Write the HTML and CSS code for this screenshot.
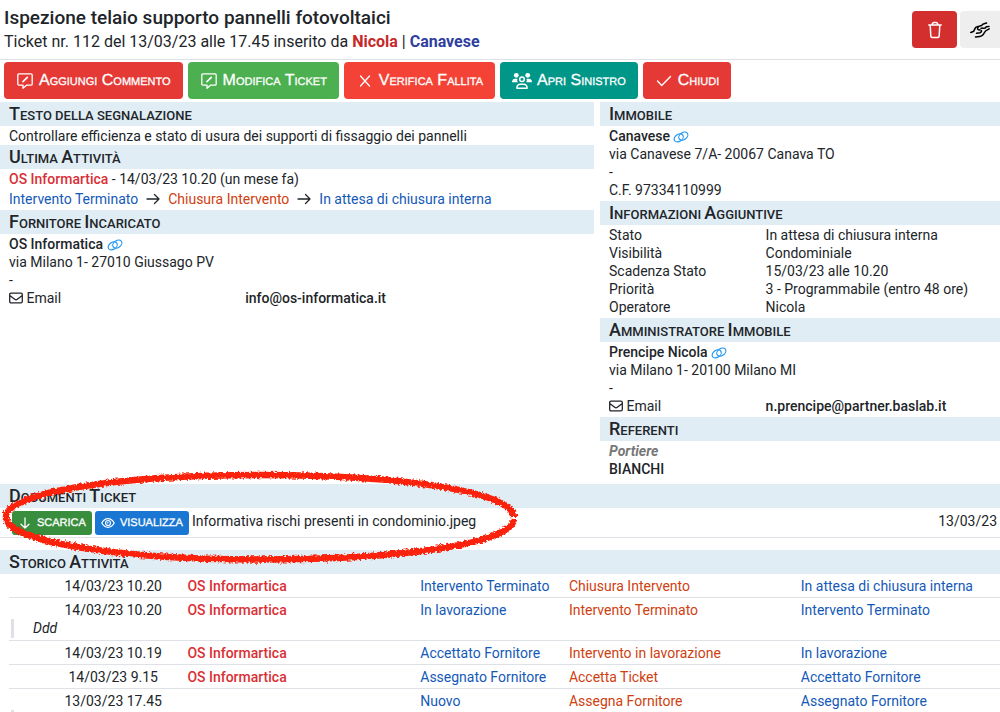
FILE: index.html
```html
<!DOCTYPE html>
<html lang="it">
<head>
<meta charset="utf-8">
<meta name="viewport" content="width=device-width, initial-scale=1">
<title>Ticket nr. 112</title>
<link rel="stylesheet" href="styles.css">
</head>
<body>
<svg class="defs" aria-hidden="true">
  <symbol id="i-comment" viewBox="0 0 18 18"><path d="M3 1.800h12q1.200 0 1.200 1.200v9q0 1.200-1.200 1.200h-4.500L7 16.300v-3.100H3q-1.200 0-1.200-1.200V3q0-1.200 1.200-1.200z" fill="none" stroke="currentColor" stroke-width="1.300" stroke-linejoin="round"/><path d="M7 9.700l4.300-4.300" fill="none" stroke="currentColor" stroke-width="1.700" stroke-linecap="round"/></symbol>
  <symbol id="i-x" viewBox="0 0 18 18"><path d="M4.500 4l9 10M13.500 4l-9 10" fill="none" stroke="currentColor" stroke-width="1.300" stroke-linecap="round"/></symbol>
  <symbol id="i-check" viewBox="0 0 18 18"><path d="M2.500 9l4.200 4.500L15.500 4.500" fill="none" stroke="currentColor" stroke-width="1.400" stroke-linecap="round" stroke-linejoin="round"/></symbol>
  <symbol id="i-users" viewBox="0 0 20 18"><g fill="currentColor"><circle cx="4.300" cy="3.300" r="2.400"/><circle cx="15.700" cy="3.300" r="2.400"/><path d="M0 10.200q0-3.500 3.200-3.500h2.300q-.9 2 .3 3.500zM20 10.200q0-3.500-3.200-3.500h-2.300q.9 2-.3 3.500z"/></g><g fill="none" stroke="currentColor" stroke-width="1.500"><circle cx="10" cy="7.200" r="2.300"/><path d="M4.900 16.200q0-3.900 3.500-3.900h3.200q3.500 0 3.500 3.900z" stroke-linejoin="round"/></g></symbol>
  <symbol id="i-trash" viewBox="0 0 18 18"><path d="M2.800 4h12.400M4.200 4l.6 11q.1 1.500 1.500 1.500h5.400q1.400 0 1.500-1.500l.6-11M6 4q.5-2.500 2-2.500h2q1.500 0 2 2.500" fill="none" stroke="currentColor" stroke-width="1.500" stroke-linecap="round" stroke-linejoin="round"/></symbol>
  <symbol id="i-hands" viewBox="0 0 20 18"><path d="M.8 11.500l2.400-1c1.400-.8 1.200-3 2.900-4.300Q7 5.400 9 5.200l2.600-.6Q12.400 3 14 2.700L16.600 2M5.500 15.900l4.300-.5q2-.2 3.200-1.600l1.900-2.900q.8-1.300 2-1.800l2.300-1.300M9 5.200Q7.300 6.800 7.600 8.200q.8 1.200 2.400.6M11 7.300h3.200q1.600-.2 2-1.500l2.800-.4M11.400 9.600q.4 1.500-1.400 2.200l-3.400.5" fill="none" stroke="currentColor" stroke-width="1.500" stroke-linecap="round" stroke-linejoin="round"/></symbol>
  <symbol id="i-link" viewBox="0 0 16 12"><g fill="none" stroke="currentColor" stroke-width="1.200"><ellipse cx="5.700" cy="6.900" rx="5" ry="3.500" transform="rotate(-35 5.700 6.900)"/><ellipse cx="10.300" cy="5.100" rx="5" ry="3.500" transform="rotate(-35 10.300 5.100)"/></g></symbol>
  <symbol id="i-mail" viewBox="0 0 14 12"><path d="M2 1.200h10q1.300 0 1.300 1.300v7q0 1.300-1.300 1.300H2Q.7 10.800.7 9.500v-7Q.7 1.200 2 1.200zM.7 3.500l5 3.800q1.300 1 2.600 0l5-3.800" fill="none" stroke="currentColor" stroke-width="1.300"/></symbol>
  <symbol id="i-arrow" viewBox="0 0 14 12"><path d="M1 6h12M8.500 1.500L13 6l-4.500 4.500" fill="none" stroke="currentColor" stroke-width="1.300" stroke-linecap="round" stroke-linejoin="round"/></symbol>
  <symbol id="i-down" viewBox="0 0 12 12"><path d="M6 1v10M2 7.200L6 11l4-3.800" fill="none" stroke="currentColor" stroke-width="1.300" stroke-linecap="round" stroke-linejoin="round"/></symbol>
  <symbol id="i-eye" viewBox="0 0 14 12"><g fill="none" stroke="currentColor" stroke-width="1.200"><path d="M.8 6Q3.200 1.700 7 1.700T13.200 6Q10.800 10.300 7 10.300T.8 6z"/><circle cx="7" cy="6" r="2.500"/><path d="M7 4.800V6H5.800" stroke-width="1"/></g></symbol>
</svg>

<header class="top">
  <div>
    <h1 class="title">Ispezione telaio supporto pannelli fotovoltaici</h1>
    <p class="subtitle">Ticket nr. 112 del 13/03/23 alle 17.45 inserito da <b class="author">Nicola</b> | <b class="place">Canavese</b></p>
  </div>
  <div class="tools">
    <button class="tool tool-delete" type="button" aria-label="Elimina"><svg class="icon"><use href="#i-trash"/></svg></button>
    <button class="tool tool-help" type="button" aria-label="Assistenza"><svg class="icon icon-wide"><use href="#i-hands"/></svg></button>
  </div>
</header>

<nav class="actions">
  <button class="btn red" type="button"><svg class="icon"><use href="#i-comment"/></svg>Aggiungi Commento</button>
  <button class="btn green" type="button"><svg class="icon"><use href="#i-comment"/></svg>Modifica Ticket</button>
  <button class="btn tomato" type="button"><svg class="icon"><use href="#i-x"/></svg>Verifica Fallita</button>
  <button class="btn teal" type="button"><svg class="icon icon-wide"><use href="#i-users"/></svg>Apri Sinistro</button>
  <button class="btn red" type="button"><svg class="icon"><use href="#i-check"/></svg>Chiudi</button>
</nav>

<main>
  <div class="columns">
    <div>
      <section>
        <h2 class="heading"><span class="cap">Testo</span> della segnalazione</h2>
        <div class="body tight"><p>Controllare efficienza e stato di usura dei supporti di fissaggio dei pannelli</p></div>
      </section>
      <section>
        <h2 class="heading"><span class="cap">Ultima</span> <span class="cap">Attività</span></h2>
        <div class="body">
          <p><span class="actor">OS Informartica</span> - 14/03/23 10.20 (un mese fa)</p>
          <p class="flow"><span class="state">Intervento Terminato</span><svg class="arrow"><use href="#i-arrow"/></svg><span class="step">Chiusura Intervento</span><svg class="arrow"><use href="#i-arrow"/></svg><span class="state">In attesa di chiusura interna</span></p>
        </div>
      </section>
      <section>
        <h2 class="heading"><span class="cap">Fornitore</span> <span class="cap">Incaricato</span></h2>
        <div class="body">
          <p class="strong">OS Informatica <a class="link" href="#" aria-label="Apri OS Informatica"><svg><use href="#i-link"/></svg></a></p>
          <p>via Milano 1- 27010 Giussago PV</p>
          <p>-</p>
          <dl class="pairs"><dt><svg class="mail"><use href="#i-mail"/></svg> Email</dt><dd class="strong">info@os-informatica.it</dd></dl>
        </div>
      </section>
    </div>
    <div>
      <section>
        <h2 class="heading"><span class="cap">Immobile</span></h2>
        <div class="body">
          <p class="strong">Canavese <a class="link" href="#" aria-label="Apri Canavese"><svg><use href="#i-link"/></svg></a></p>
          <p>via Canavese 7/A- 20067 Canava TO</p>
          <p>-</p>
          <p>C.F. 97334110999</p>
        </div>
      </section>
      <section>
        <h2 class="heading"><span class="cap">Informazioni</span> <span class="cap">Aggiuntive</span></h2>
        <dl class="body pairs">
          <dt>Stato</dt><dd>In attesa di chiusura interna</dd>
          <dt>Visibilità</dt><dd>Condominiale</dd>
          <dt>Scadenza Stato</dt><dd>15/03/23 alle 10.20</dd>
          <dt>Priorità</dt><dd>3 - Programmabile (entro 48 ore)</dd>
          <dt>Operatore</dt><dd>Nicola</dd>
        </dl>
      </section>
      <section>
        <h2 class="heading"><span class="cap">Amministratore</span> <span class="cap">Immobile</span></h2>
        <div class="body">
          <p class="strong">Prencipe Nicola <a class="link" href="#" aria-label="Apri Prencipe Nicola"><svg><use href="#i-link"/></svg></a></p>
          <p>via Milano 1- 20100 Milano MI</p>
          <p>-</p>
          <dl class="pairs"><dt><svg class="mail"><use href="#i-mail"/></svg> Email</dt><dd class="strong">n.prencipe@partner.baslab.it</dd></dl>
        </div>
      </section>
      <section>
        <h2 class="heading"><span class="cap">Referenti</span></h2>
        <div class="body">
          <p class="role">Portiere</p>
          <p class="strong">BIANCHI</p>
        </div>
      </section>
    </div>
  </div>

  <section class="documents">
    <h2 class="heading"><span class="cap">Documenti</span> <span class="cap">Ticket</span></h2>
    <div class="document">
      <button class="mini download" type="button"><svg><use href="#i-down"/></svg>SCARICA</button>
      <button class="mini view" type="button"><svg><use href="#i-eye"/></svg>VISUALIZZA</button>
      <span class="file">Informativa rischi presenti in condominio.jpeg</span>
      <time class="date">13/03/23</time>
    </div>
    <svg class="marker" viewBox="0 0 530 110" aria-hidden="true">
      <filter id="rough" x="-5%" y="-10%" width="110%" height="120%">
        <feTurbulence type="fractalNoise" baseFrequency="0.45" numOctaves="2" seed="4"/>
        <feDisplacementMap in="SourceGraphic" scale="5" xChannelSelector="R" yChannelSelector="G"/>
      </filter>
      <path filter="url(#rough)" d="M514 56C513 31 405 14 260 14S6 32 6 56s109 42.500 254 42.500S513 82 514 58" fill="none" stroke="#fb2108" stroke-width="6.500"/>
    </svg>
  </section>

  <section>
    <h2 class="heading"><span class="cap">Storico</span> <span class="cap">Attività</span></h2>
    <table class="history">
      <colgroup><col class="c-date"><col class="c-actor"><col class="c-from"><col class="c-step"><col class="c-to"></colgroup>
      <tbody><tr><td class="when">14/03/23 10.20</td><td class="actor">OS Informartica</td><td class="state">Intervento Terminato</td><td class="step">Chiusura Intervento</td><td class="state">In attesa di chiusura interna</td></tr></tbody>
      <tbody><tr class="noted"><td class="when">14/03/23 10.20</td><td class="actor">OS Informartica</td><td class="state">In lavorazione</td><td class="step">Intervento Terminato</td><td class="state">Intervento Terminato</td></tr>
      <tr><td class="note" colspan="5"><blockquote>Ddd</blockquote></td></tr></tbody>
      <tbody><tr><td class="when">14/03/23 10.19</td><td class="actor">OS Informartica</td><td class="state">Accettato Fornitore</td><td class="step">Intervento in lavorazione</td><td class="state">In lavorazione</td></tr></tbody>
      <tbody><tr><td class="when">14/03/23 9.15</td><td class="actor">OS Informartica</td><td class="state">Assegnato Fornitore</td><td class="step">Accetta Ticket</td><td class="state">Accettato Fornitore</td></tr></tbody>
      <tbody><tr class="noted"><td class="when">13/03/23 17.45</td><td></td><td class="state">Nuovo</td><td class="step">Assegna Fornitore</td><td class="state">Assegnato Fornitore</td></tr>
      <tr><td class="note" colspan="5"><blockquote></blockquote></td></tr></tbody>
    </table>
  </section>
</main>
</body>
</html>
```
FILE: styles.css
```css
* { box-sizing: border-box; }
body {
  margin: 0;
  font: 14px/18px Roboto, "Liberation Sans", sans-serif;
  color: #212529;
  background: #fff;
}
h1, h2, p, dl, dd, blockquote { margin: 0; }
button { border: 0; cursor: pointer; text-rendering: geometricPrecision; }
.defs { display: none; }

.top {
  display: flex;
  justify-content: space-between;
  align-items: center;
  height: 60px;
  padding-left: 4px;
  border-bottom: 1px solid #dee2e6;
}
.title { font-size: 19px; line-height: 24px; font-weight: 500; }
.subtitle { font-size: 16px; line-height: 24px; }
.author { color: #c62828; }
.place { color: #303f9f; }
.tools { display: flex; gap: 3px; }
.tool {
  display: flex;
  align-items: center;
  justify-content: center;
  height: 37px;
  border-radius: 4px;
}
.tool-delete { width: 45px; color: #fff; background: #d32f2f; }
.tool-help { width: 40px; color: #000; background: #eee; border-radius: 4px 0 0 4px; }
.icon { width: 18px; height: 18px; flex: none; }
.icon-wide { width: 20px; }

.actions { display: flex; gap: 5px; padding: 2px 4px 3px; }
.btn {
  display: flex;
  align-items: center;
  gap: 5px;
  height: 37px;
  padding: 0 12px;
  border-radius: 4px;
  color: #fff;
  font: 16px/24px "Liberation Sans", Arial, sans-serif;
  font-variant: small-caps;
  -webkit-text-stroke: 0.3px currentColor;
  white-space: nowrap;
}
.red { background: #e53935; }
.green { background: #4caf50; }
.tomato { background: #f44336; }
.teal { background: #009688; }

.columns {
  display: grid;
  grid-template-columns: 594fr 400fr;
  column-gap: 6px;
  padding-bottom: 4px;
}
.heading {
  height: 24px;
  padding-left: 9px;
  font-size: 13px;
  line-height: 24px;
  font-weight: 500;
  text-transform: uppercase;
  background: #e1edf5;
}
.cap { display: inline-block; }
.cap::first-letter { font-size: 18px; }
.body { padding: 1px 9px 2px; }
.body.tight { padding-bottom: 0; }
.strong { font-weight: 500; }
.role { font-weight: 700; font-style: italic; color: #777; }
.actor { font-weight: 500; color: #d92f35; }
.state { color: #1459b8; }
.step { color: #d0400f; }
.flow { display: flex; align-items: center; gap: 8px; padding-top: 2px; }
.arrow { width: 14px; height: 12px; }
.link { color: #2196f3; }
.link svg { width: 16px; height: 12px; vertical-align: -2px; }
.mail { width: 14px; height: 12px; vertical-align: -1px; }
.pairs { display: grid; grid-template-columns: 41% 59%; }

.documents { position: relative; margin-bottom: 12px; }
.document {
  display: flex;
  align-items: center;
  gap: 3px;
  padding: 3px 3px 2px 12px;
  border-bottom: 1px solid #dee2e6;
}
.mini {
  display: flex;
  align-items: center;
  gap: 5px;
  height: 24px;
  padding: 0 6px;
  border-radius: 3px;
  color: #fff;
  font: 11px/18px "Liberation Sans", Arial, sans-serif;
  -webkit-text-stroke: 0.3px currentColor;
}
.mini svg { width: 14px; height: 12px; }
.download { background: #388e3c; }
.view { background: #1976d2; }
.file, .date { padding-bottom: 5px; }
.date { margin-left: auto; }
.marker {
  position: absolute;
  left: 0;
  top: -23px;
  width: 530px;
  height: 110px;
  pointer-events: none;
}

.history {
  width: calc(100% - 9px);
  margin-left: 9px;
  border-collapse: collapse;
  table-layout: fixed;
}
.history tbody { border-bottom: 1px solid #dee2e6; }
.history td { padding: 3px 0 2px; }
.history .noted td { padding-bottom: 0; }
.c-date { width: 18%; }
.c-actor { width: 23.5%; }
.c-from { width: 15%; }
.c-step { width: 23.4%; }
.history .when { padding-left: 30px; text-align: center; }
.history .note { padding: 0 2px 2px; }
.note blockquote {
  min-height: 19px;
  padding-left: 19px;
  border-left: 3px solid #dee2e6;
  font-style: italic;
}
```
